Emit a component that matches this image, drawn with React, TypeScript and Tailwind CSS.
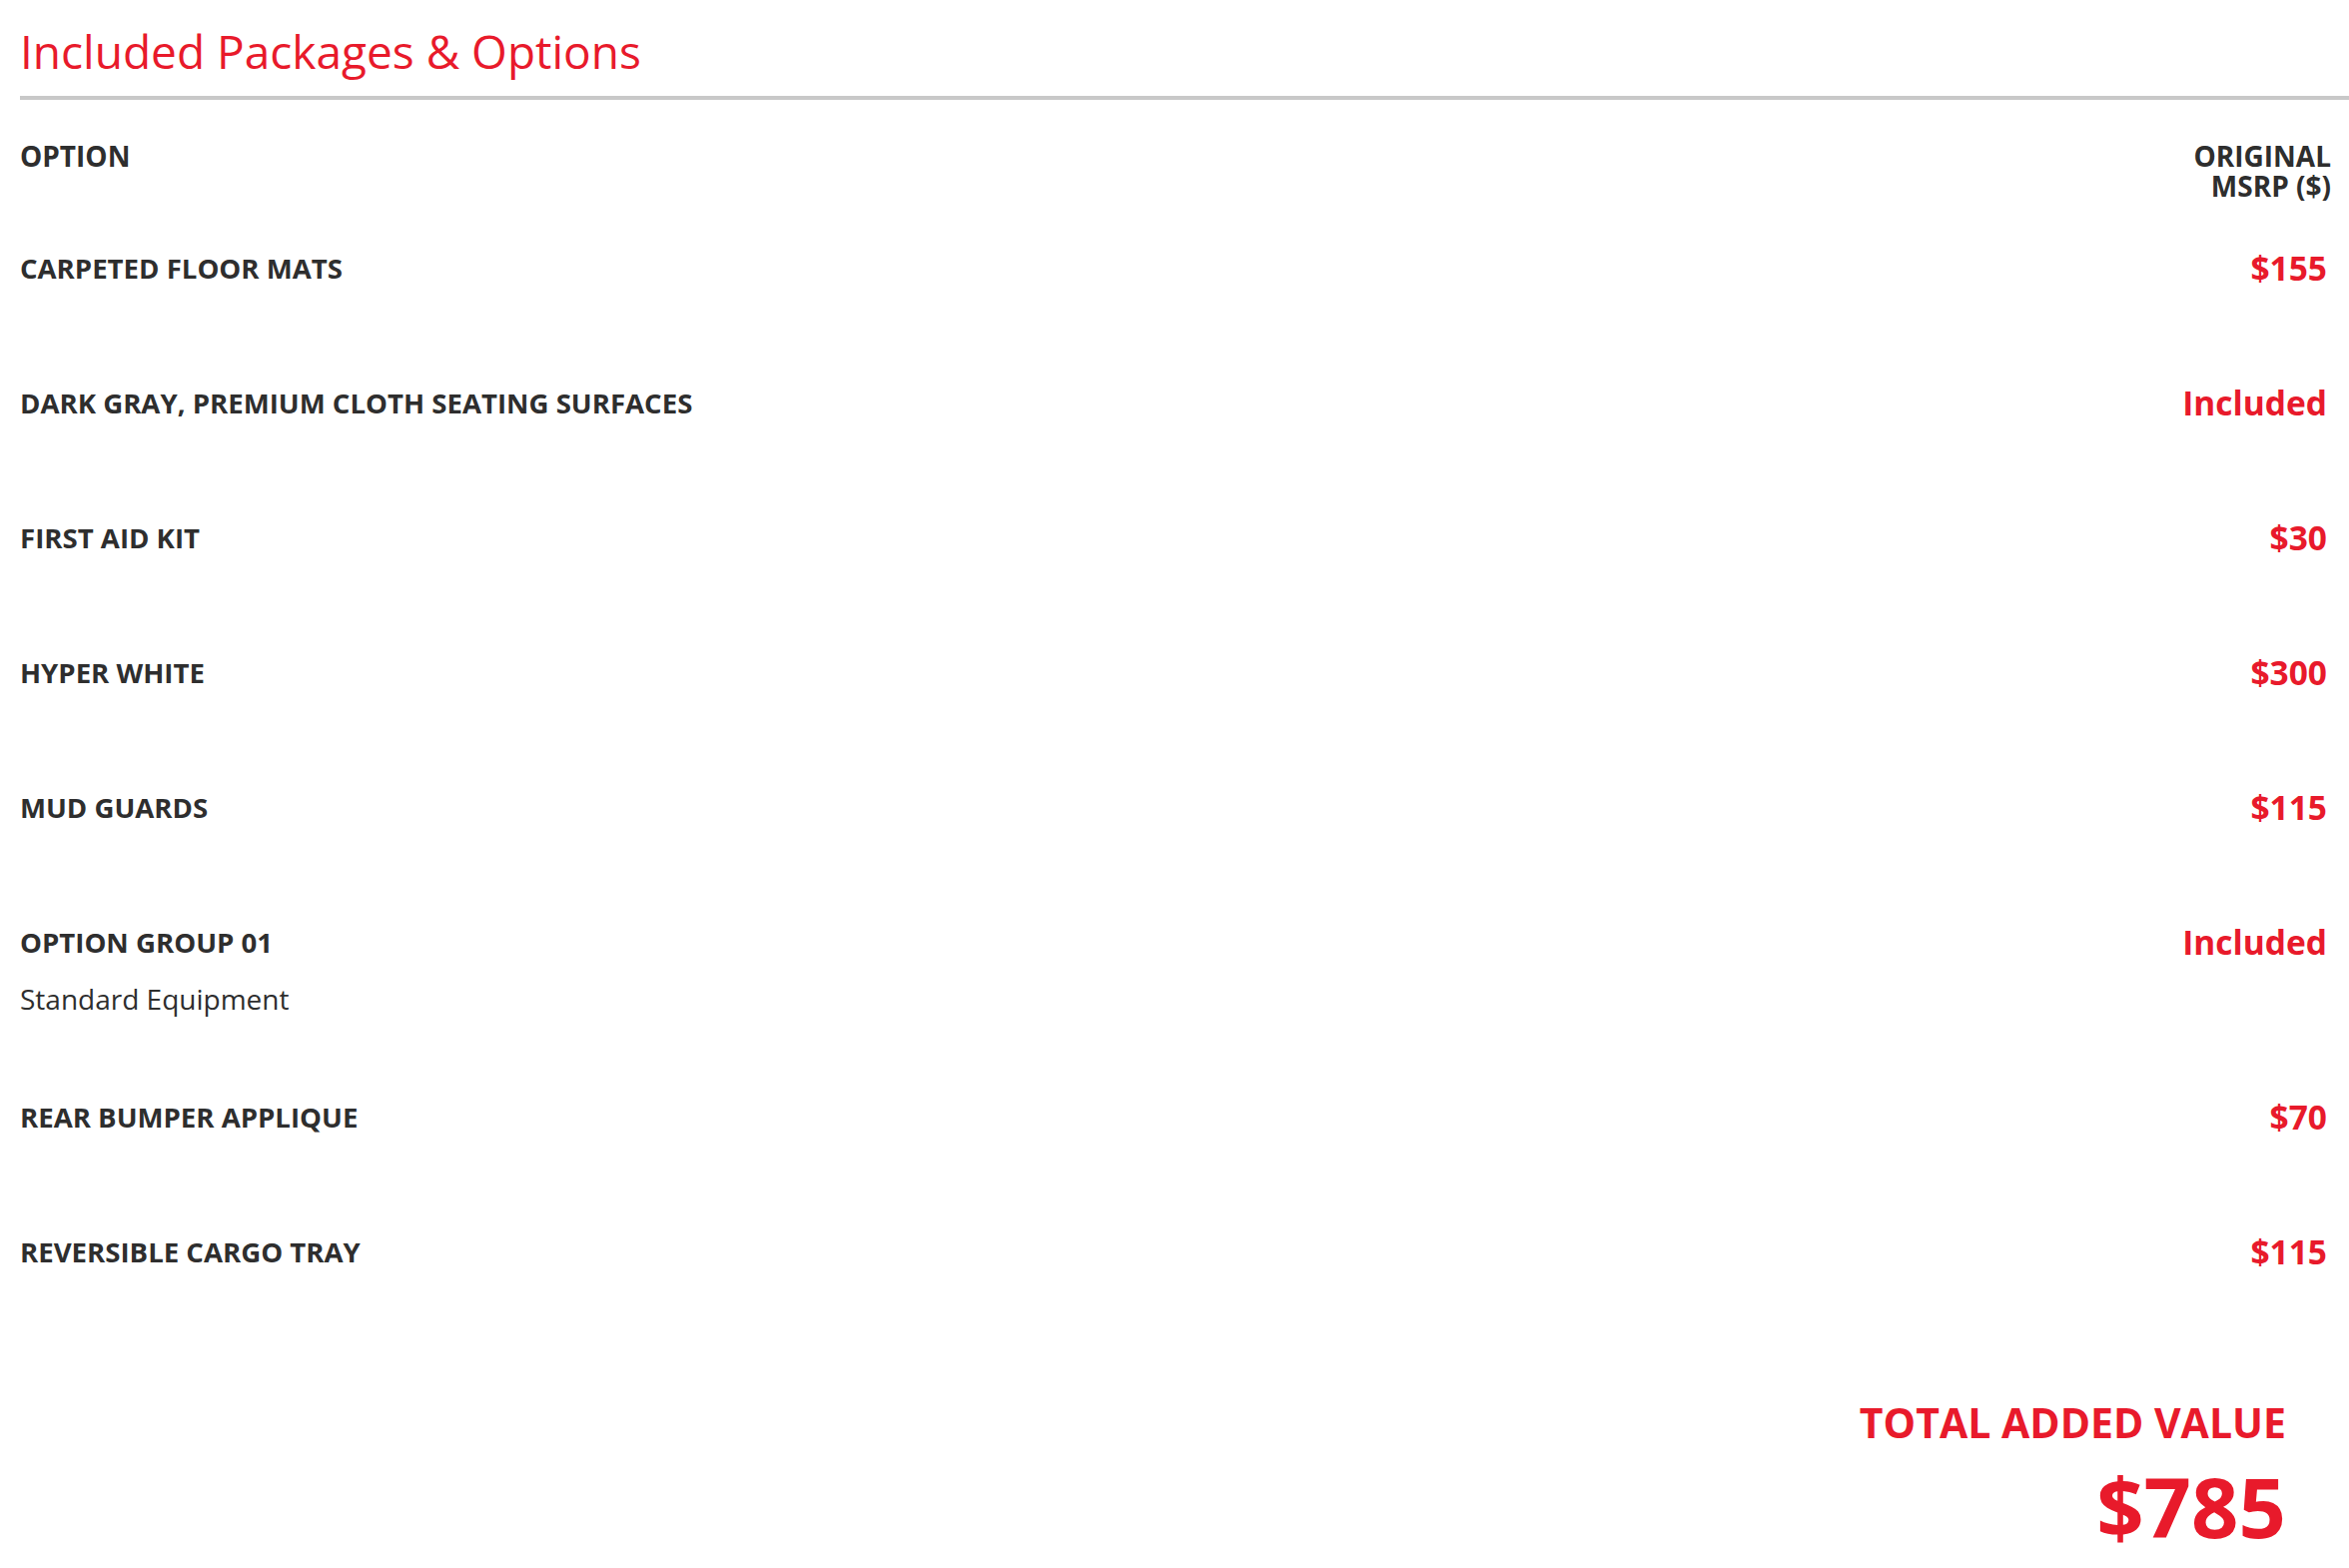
import React from "react";

type Option = {
  name: string;
  price: string;
  note?: string;
};

const OPTIONS: Option[] = [
  { name: "CARPETED FLOOR MATS", price: "$155" },
  { name: "DARK GRAY, PREMIUM CLOTH SEATING SURFACES", price: "Included" },
  { name: "FIRST AID KIT", price: "$30" },
  { name: "HYPER WHITE", price: "$300" },
  { name: "MUD GUARDS", price: "$115" },
  { name: "OPTION GROUP 01", price: "Included", note: "Standard Equipment" },
  { name: "REAR BUMPER APPLIQUE", price: "$70" },
  { name: "REVERSIBLE CARGO TRAY", price: "$115" },
];

const OptionRow = ({ option }: { option: Option }) => (
  <div
    className={`flex items-start justify-between ${
      option.note ? "pb-[78px]" : "pb-[95px]"
    }`}
  >
    <div className="flex flex-col">
      <span className="text-[27.6px] font-bold leading-[40px] text-[#2e2e2e]">
        {option.name}
      </span>
      {option.note && (
        <span className="mt-[17px] text-[28px] leading-[40px] text-[#2e2e2e]">
          {option.note}
        </span>
      )}
    </div>
    <span className="pr-[4px] text-[33.5px] font-bold leading-[40px] text-[#e81a2b]">
      {option.price}
    </span>
  </div>
);

export default function App() {
  return (
    <div
      className="min-h-screen bg-white pl-[20px]"
      style={{ fontFamily: '"Open Sans", "Liberation Sans", sans-serif' }}
    >
      {/* Section title */}
      <div className="border-b-4 border-[#c8c8c8] pt-[19px] pb-[13px]">
        <h2 className="text-[46px] font-normal leading-[64px] text-[#e81a2b]">
          Included Packages &amp; Options
        </h2>
      </div>

      <div className="pr-[18px]">
        {/* Table header */}
        <div className="mt-[41px] flex items-start justify-between text-[28px] font-bold leading-[30px] text-[#2e2e2e]">
          <span>OPTION</span>
          <span className="text-right">
            ORIGINAL
            <br />
            MSRP ($)
          </span>
        </div>

        {/* Option rows */}
        <div className="mt-[47px] flex flex-col">
          {OPTIONS.map((option) => (
            <OptionRow key={option.name} option={option} />
          ))}
        </div>

        {/* Total */}
        <div className="mt-[28px] flex flex-col items-end pr-[45px] font-bold text-[#e81a2b]">
          <span className="text-[41px] leading-[56px]">TOTAL ADDED VALUE</span>
          <span className="mt-[8px] text-[83px] leading-[96px]">$785</span>
        </div>
      </div>
    </div>
  );
}
